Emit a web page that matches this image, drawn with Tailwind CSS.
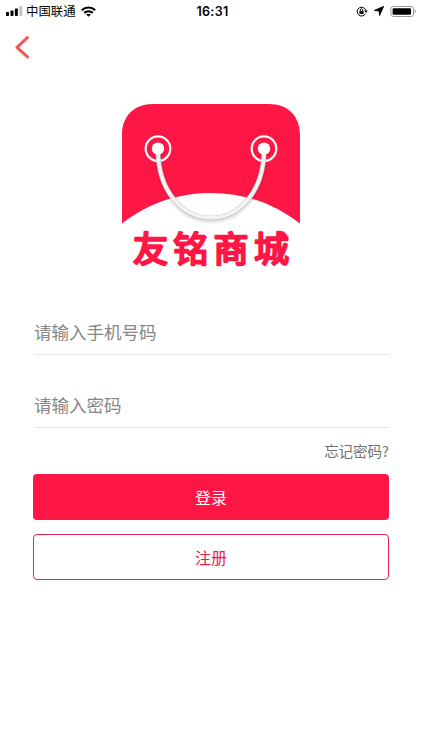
<!DOCTYPE html>
<html lang="zh-CN">
<head>
    <meta charset="UTF-8">
    <meta name="viewport" content="width=device-width, initial-scale=1.0">
    <title>登录</title>
    <script src="https://cdn.jsdelivr.net/npm/@tailwindcss/browser@4"></script>
</head>
<body class="bg-white h-screen overflow-hidden font-['Inter','Noto_Sans_CJK_SC',sans-serif]">
    <!-- Status bar -->
    <div class="grid grid-cols-3 items-center h-[22px] pl-[6px] pr-[4px] text-black">
        <div class="flex items-center">
            <svg class="w-[17px] h-[10px]" viewBox="0 0 17 10">
                <rect x="0" y="6" width="3" height="4" rx=".8"/>
                <rect x="4.5" y="4.5" width="3" height="5.5" rx=".8"/>
                <rect x="8.9" y="2.5" width="3" height="7.5" rx=".8"/>
                <rect x="13.3" y="0" width="3" height="10" rx=".8" fill="#c4c4c4"/>
            </svg>
            <span class="ml-[3px] pt-px text-[12.4px] leading-[21px]">中国联通</span>
            <svg class="ml-[5px] w-[15px] h-[11px]" viewBox="0 0 15 11" fill="none" stroke="#000" stroke-width="2.2">
                <path d="M.8 4.2C4.5.6 10.5.6 14.2 4.2"/>
                <path d="M3.2 6.9C5.7 4.7 9.3 4.7 11.8 6.9"/>
                <path d="M7.5 10.8L5.2 8.6C6.5 7.6 8.5 7.6 9.8 8.6Z" fill="#000" stroke="none"/>
            </svg>
        </div>
        <div class="pt-px pl-px text-center text-[12.5px] font-semibold leading-[21px] tracking-[.3px]">16:31</div>
        <div class="flex items-center justify-end">
            <svg class="w-[12px] h-[11px]" viewBox="0 0 12 11" fill="none" stroke="#000">
                <path d="M9.4 7.8A4.4 4.4 0 1 1 9.8 4.4"/>
                <path d="M8.1 4.5H11.8L10 6.9Z" fill="#000" stroke="none"/>
                <rect x="3.4" y="5" width="4.2" height="3" fill="#000" stroke="none"/>
                <path d="M4.3 5V4A1.2 1.2 0 0 1 6.7 4V5" stroke-width=".9"/>
            </svg>
            <svg class="ml-[6px] w-[10px] h-[10px]" viewBox="0 0 10 10">
                <path d="M9.7.3L5.6 9.6L5 5L.3 4.4Z" stroke="#000" stroke-width=".8" stroke-linejoin="round"/>
            </svg>
            <svg class="ml-[6px] w-[28px] h-[11px]" viewBox="0 0 28 11">
                <rect x=".9" y=".5" width="22.6" height="10" rx="2.4" fill="#fff" stroke="#999"/>
                <rect x="2.6" y="2.2" width="18.4" height="6.6" rx="1"/>
                <path d="M24.7 3.6C26.3 4 26.3 7 24.7 7.4Z" fill="#999"/>
            </svg>
        </div>
    </div>

    <!-- Back -->
    <div class="h-[50px] pl-[14px] pt-[13px]">
        <svg class="w-[16px] h-[24px]" viewBox="0 0 16 24" fill="none" stroke="#ef5857" stroke-width="3" stroke-linecap="round" stroke-linejoin="round">
            <path d="M13.4 2.6L3 12.3L13.4 21.9"/>
        </svg>
    </div>

    <!-- Logo -->
    <div class="flex justify-center pt-8">
        <svg class="w-[178px] h-[170px]" viewBox="0 0 178 170" fill="none">
            <defs>
                <filter id="shadow" x="-20%" y="-20%" width="140%" height="150%">
                    <feDropShadow dx="0" dy="1.5" stdDeviation="1.6" flood-color="#000" flood-opacity=".18"/>
                </filter>
            </defs>
            <path d="M0 119.5V31C0 12 12 0 31 0H147C166 0 178 12 178 31V119.5C151 99 122 89 89 89S27 99 0 119.5Z" fill="#fe1745"/>
            <circle cx="36" cy="44.7" r="12.3" stroke="#fff" stroke-width="2.2"/>
            <circle cx="142" cy="44.7" r="12.3" stroke="#fff" stroke-width="2.2"/>
            <g filter="url(#shadow)">
                <path d="M36 46C36 85 59 114.2 89 114.2S142 85 142 46" stroke="#c8c8c8" stroke-width="4.8"/>
                <path d="M36 46C36 85 59 113.8 89 113.8S142 85 142 46" stroke="#f4f4f4" stroke-width="3.4"/>
                <circle cx="36" cy="44.7" r="6.2" fill="#fff"/>
                <circle cx="142" cy="44.7" r="6.2" fill="#fff"/>
            </g>
            <text x="11" y="157.5" class="text-[35px] tracking-[5.3px] font-normal" fill="#fe1745" stroke="#fe1745" stroke-width="2.4" stroke-linejoin="round" stroke-linecap="round">友铭商城</text>
        </svg>
    </div>

    <!-- Form -->
    <form class="flex flex-col px-[33px] pt-[36px]">
        <input type="tel" placeholder="请输入手机号码" class="ml-px h-[45px] border-b border-[#e6e6e6] text-[17.5px] placeholder:text-[#868686] outline-none">
        <input type="password" placeholder="请输入密码" class="ml-px mt-[28px] h-[45px] border-b border-[#e6e6e6] text-[17.5px] placeholder:text-[#868686] outline-none">
        <a href="#" class="self-end mt-[12px] h-[22px] text-[14.5px] leading-[22px] text-[#707070] font-['Noto_Sans_CJK_SC',sans-serif]">忘记密码?</a>
        <button type="submit" class="mt-[12px] h-[46px] pt-px rounded-[4px] bg-[#fe1745] text-white text-[16px]">登录</button>
        <button type="button" class="mt-[14px] h-[46px] pt-px rounded-[4px] border border-[#e0254f] text-[#ee1c4b] text-[16px]">注册</button>
    </form>
</body>
</html>
